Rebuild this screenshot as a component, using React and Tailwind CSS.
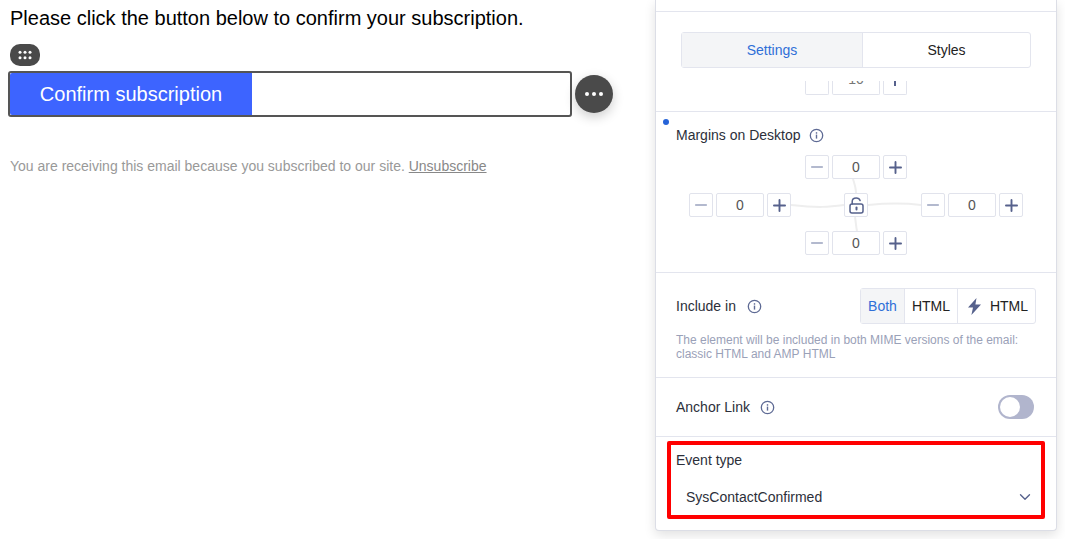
import React from "react"
import { Minus, Plus, ChevronDown } from "lucide-react"

const Stepper = ({ value = "0" }) => (
  <div className="flex gap-[3px]">
    <button className="flex h-6 w-6 items-center justify-center rounded-[2px] border border-[#e1e3ec] bg-white text-[#9aa3bf]">
      <Minus size={18} strokeWidth={2.2} />
    </button>
    <div className="flex h-6 w-12 items-center justify-center rounded-[2px] border border-[#e1e3ec] bg-white text-[14px] text-[#555]">
      {value}
    </div>
    <button className="flex h-6 w-6 items-center justify-center rounded-[2px] border border-[#e1e3ec] bg-white text-[#56618c]">
      <Plus size={19} strokeWidth={2.4} />
    </button>
  </div>
)

const InfoIcon = () => (
  <svg width="15" height="15" viewBox="0 0 15 15" fill="none" className="shrink-0">
    <circle cx="7.5" cy="7.5" r="6.2" stroke="#5e6a94" strokeWidth="1.3" />
    <rect x="6.8" y="6.6" width="1.4" height="4" fill="#5e6a94" />
    <rect x="6.8" y="4.2" width="1.4" height="1.5" fill="#5e6a94" />
  </svg>
)

const LockIcon = () => (
  <svg width="15" height="17" viewBox="0 0 15 17" fill="none" stroke="#56618c" strokeWidth="1.5">
    <path d="M3.2 7 V4.6 C3.2 2.4 5 1 7.2 1 C9 1 10.6 2 11.1 3.6" strokeLinecap="round" />
    <rect x="1" y="7" width="13" height="9" rx="2" />
    <path d="M7.5 10.4 V12.6" strokeWidth="2" strokeLinecap="round" />
  </svg>
)

const App = () => {
  return (
    <div className="flex h-[539px] w-[1065px] overflow-hidden bg-white font-['Liberation_Sans',Arial,sans-serif]">
      {/* Email canvas */}
      <div className="w-[655px] shrink-0 pl-2">
        <p className="ml-[2px] mt-[5px] text-[20px] leading-[26px] text-black">
          Please click the button below to confirm your subscription.
        </p>
        <div className="ml-[2px] mt-[13px] flex h-[22px] w-[30px] items-center justify-center rounded-[10px] bg-[#4a4a4a]">
          <svg width="14" height="10" viewBox="0 0 14 10" fill="white">
            <circle cx="2" cy="2.2" r="1.5" />
            <circle cx="7" cy="2.2" r="1.5" />
            <circle cx="12" cy="2.2" r="1.5" />
            <circle cx="2" cy="7.8" r="1.5" />
            <circle cx="7" cy="7.8" r="1.5" />
            <circle cx="12" cy="7.8" r="1.5" />
          </svg>
        </div>
        <div className="relative mt-[5px] w-[564px]">
          <div className="h-[46px] rounded-[3px] border-2 border-[#555] bg-white">
            <div className="flex h-full w-[242px] items-center justify-center rounded-l-[2px] bg-[#3d64ff] text-[20px] text-white">
              Confirm subscription
            </div>
          </div>
          <button className="absolute left-[567px] top-[4px] flex h-[38px] w-[38px] items-center justify-center rounded-[19px] bg-[#4a4a4a] shadow-[0_4px_12px_rgba(0,0,0,0.2)]">
            <svg width="18" height="4" viewBox="0 0 18 4" fill="white">
              <circle cx="2" cy="2" r="2" />
              <circle cx="9" cy="2" r="2" />
              <circle cx="16" cy="2" r="2" />
            </svg>
          </button>
        </div>
        <p className="ml-[2px] mt-[40px] text-[14px] leading-[18px] text-[#999]">
          You are receiving this email because you subscribed to our site.{" "}
          <a className="text-[#888] underline">Unsubscribe</a>
        </p>
      </div>

      {/* Settings panel */}
      <div className="flex h-[531px] w-[402px] shrink-0 flex-col rounded-b-[4px] border-x border-b border-[#dcdee6] bg-white text-[14px] text-[#2c2f3a] shadow-[0_4px_12px_rgba(0,0,0,0.12)]">
        <div className="h-[12px] shrink-0 border-b border-[#e3e5ee]" />

        <div className="h-[100px] shrink-0 overflow-hidden border-b border-[#e3e5ee] px-[25px] pt-5">
          <div className="flex h-[36px] w-[350px] rounded-[3px] border border-[#e3e5ee]">
            <div className="flex w-[181px] items-center justify-center border-r border-[#e3e5ee] bg-[#f4f5f7] text-[#2f6fd8]">
              Settings
            </div>
            <div className="flex flex-1 items-center justify-center text-[#222]">Styles</div>
          </div>
          {/* stepper scrolled under the tabs */}
          <div className="mt-[13px] flex h-[14px] justify-center overflow-hidden">
            <div className="flex gap-[3px]">
              <div className="h-[14px] w-6 rounded-b-[2px] border-x border-b border-[#e1e3ec]" />
              <div className="flex h-[14px] w-12 justify-center overflow-hidden rounded-b-[2px] border-x border-b border-[#e1e3ec] text-[14px] leading-[6px] text-[#777]">
                <span className="-mt-[5px]">10</span>
              </div>
              <div className="flex h-[14px] w-6 justify-center rounded-b-[2px] border-x border-b border-[#e1e3ec]">
                <div className="h-[5px] w-[2px] bg-[#56618c]" />
              </div>
            </div>
          </div>
        </div>

        <div className="relative h-[161px] shrink-0 border-b border-[#e3e5ee] px-5 pt-[14px]">
          <span className="absolute left-[7px] top-[7px] h-[6px] w-[6px] rounded-full bg-[#2563d8]" />
          <div className="flex h-[18px] items-center gap-2 leading-[18px]">
            Margins on Desktop <InfoIcon />
          </div>
          <div className="relative ml-[13px] mt-[11px] flex w-[334px] flex-col items-center gap-[14px]">
            <svg className="absolute left-0 top-0" width="334" height="100" fill="none" stroke="#eeeeee" strokeWidth="2">
              <path d="M164 24 C166 30 167 34 167 38" />
              <path d="M102 50 C130 53 140 52 155 50" />
              <path d="M179 50 C200 48 215 48 232 50" />
              <path d="M166 62 C167 68 167 72 168 76" />
            </svg>
            <div className="relative"><Stepper /></div>
            <div className="relative flex w-full items-center justify-between">
              <Stepper />
              <button className="flex h-6 w-6 items-center justify-center rounded-[2px] border border-[#e1e3ec] bg-white">
                <LockIcon />
              </button>
              <Stepper />
            </div>
            <div className="relative"><Stepper /></div>
          </div>
        </div>

        <div className="h-[105px] shrink-0 border-b border-[#e3e5ee] px-5 pt-[15px]">
          <div className="flex h-[36px] items-center justify-between">
            <div className="flex items-center gap-[11px]">
              Include in <InfoIcon />
            </div>
            <div className="flex h-[36px] rounded-[3px] border border-[#e3e5ee] text-[#222]">
              <div className="flex w-[44px] items-center justify-center border-r border-[#e3e5ee] bg-[#f4f5f7] text-[#2f6fd8]">
                Both
              </div>
              <div className="flex w-[53px] items-center justify-center border-r border-[#e3e5ee]">HTML</div>
              <div className="flex w-[77px] items-center justify-center gap-[8px] pl-[2px]">
                <svg width="15" height="17" viewBox="0 0 15 17" fill="#56618c">
                  <path d="M9.5 0 L1 9.6 H6 L4.4 17 L14 6.6 H8.4 Z" />
                </svg>
                HTML
              </div>
            </div>
          </div>
          <p className="mt-[9px] text-[12px] leading-[14px] text-[#9aa1b8]">
            The element will be included in both MIME versions of the email:
            <br />
            classic HTML and AMP HTML
          </p>
        </div>

        <div className="flex h-[59px] shrink-0 items-center justify-between border-b border-[#e3e5ee] pl-5 pr-[22px]">
          <div className="flex items-center gap-[10px]">
            Anchor Link <InfoIcon />
          </div>
          <div className="flex h-6 w-9 items-center rounded-full bg-[#b1b5cd] pl-[2px]">
            <div className="h-5 w-5 rounded-full bg-white" />
          </div>
        </div>

        <div className="mx-[11px] mt-1 h-[78px] shrink-0 rounded-[2px] border-[4px] border-[#ff0000] px-[5px]">
          <div className="mt-[6px] leading-[18px]">Event type</div>
          <div className="mt-[19px] flex items-center justify-between pl-[10px] pr-[2px] leading-[18px]">
            SysContactConfirmed
            <ChevronDown size={18} strokeWidth={1.8} className="text-[#56618c]" />
          </div>
        </div>
      </div>
    </div>
  )
}

export default App
